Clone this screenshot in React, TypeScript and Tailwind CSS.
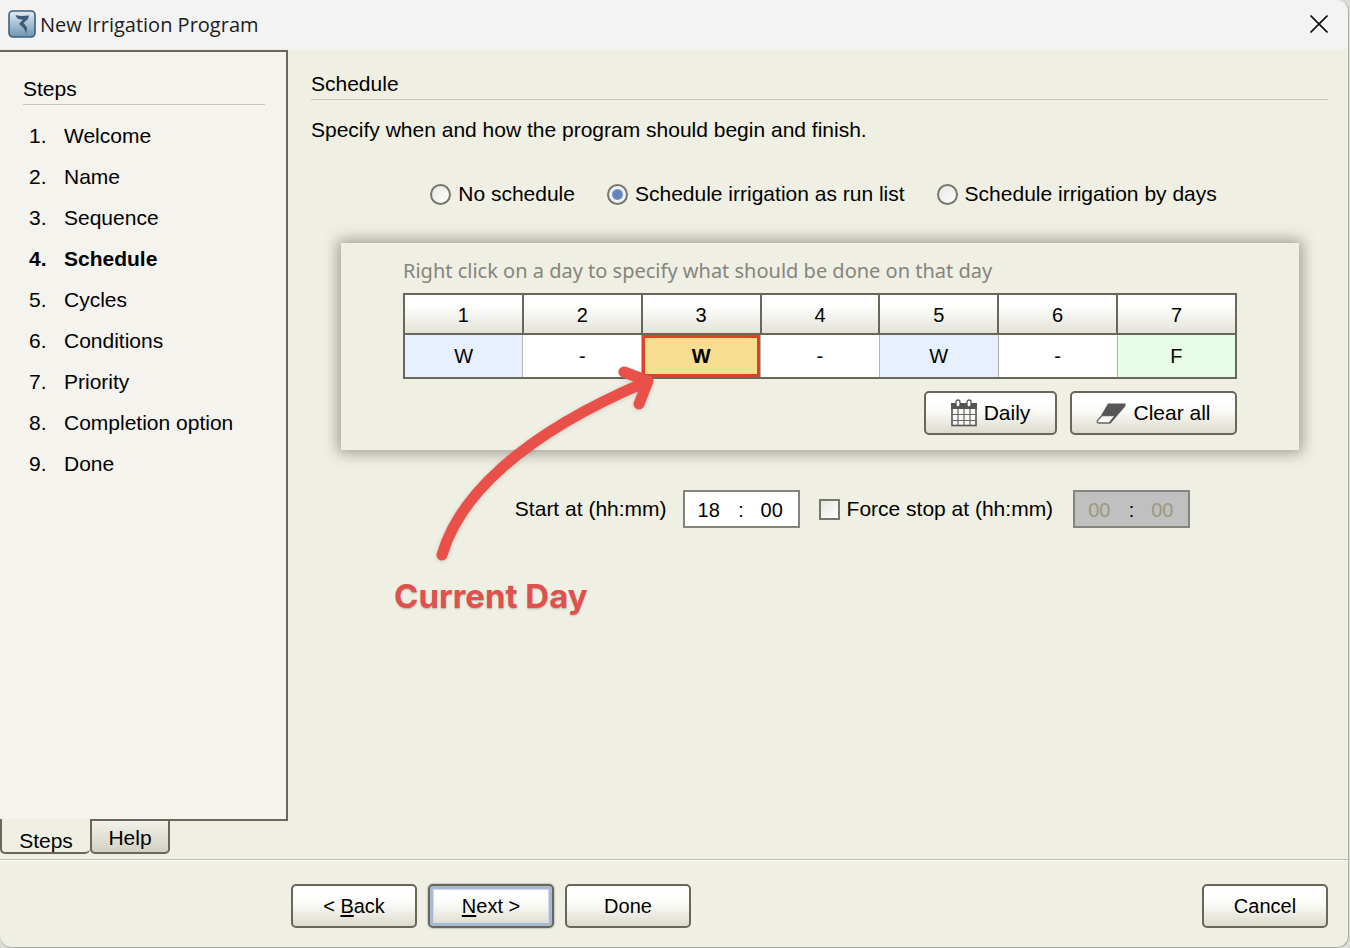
import { useState } from 'react'
import type { ReactNode } from 'react'
import clsx from 'clsx'

const steps = [
	'Welcome',
	'Name',
	'Sequence',
	'Schedule',
	'Cycles',
	'Conditions',
	'Priority',
	'Completion option',
	'Done',
]

const modes = [
	{ id: 'none', label: 'No schedule' },
	{ id: 'runlist', label: 'Schedule irrigation as run list' },
	{ id: 'days', label: 'Schedule irrigation by days' },
]

const days = ['W', '-', 'W', '-', 'W', '-', 'F']
const currentDay = 3

const AppIcon = () => (
	<svg className="size-7" viewBox="0 0 28 28" aria-hidden="true">
		<defs>
			<linearGradient id="app-icon" x1="0" y1="0" x2="0" y2="1">
				<stop offset="0" stopColor="#e3edf4" />
				<stop offset="1" stopColor="#6c93b2" />
			</linearGradient>
		</defs>
		<rect x="1" y="1" width="26" height="26" rx="4" fill="url(#app-icon)" stroke="#3c5f7c" strokeWidth="1.6" />
		<path
			d="M7.5 5C12 6.5 16 6 21 5.5L20 9L15.500 13L19 17.500L18.500 23.500L15.500 18L11 14L15 9.500C12 9.500 9 9.500 7.500 5Z"
			fill="#3a5c78"
		/>
	</svg>
)

const CalendarIcon = () => (
	<svg className="h-[28px] w-[26px]" viewBox="0 0 26 28" aria-hidden="true">
		<rect x="1" y="5" width="24" height="21.500" fill="#f8f8f5" stroke="#555" strokeWidth="1.600" />
		<rect x="0" y="4" width="26" height="6" fill="#555" />
		<path d="M7 10v17M13 10v17M19 10v17M0 15.500h26M0 21.500h26" stroke="#666" strokeWidth="1.200" />
		<rect x="5" y="1" width="4" height="7" rx="2" fill="#fff" stroke="#555" strokeWidth="1.300" />
		<rect x="16" y="1" width="4" height="7" rx="2" fill="#fff" stroke="#555" strokeWidth="1.300" />
	</svg>
)

const EraserIcon = () => (
	<svg className="h-[21px] w-[30px]" viewBox="0 0 30 21" aria-hidden="true">
		<path
			d="M6 12.500L1.500 17.500Q0.500 20 2.500 20H13.500L20 12.500Z"
			fill="#fafaf7"
			stroke="#666"
			strokeWidth="1.300"
			strokeLinejoin="round"
		/>
		<path d="M12 0.500H29.500V3L14.500 20.500L13 19.500L18.500 12.500H5Z" fill="#575757" />
	</svg>
)

type ButtonProps = { children: ReactNode; className?: string; focused?: boolean }

const Button = ({ children, className, focused }: ButtonProps) => (
	<button
		type="button"
		className={clsx(
			'flex h-11 items-center justify-center rounded-[5px] border-2 border-[#68675a] bg-linear-to-b from-white from-25% via-[#f8f8f4] via-50% to-[#dcdbcc]',
			focused && 'shadow-[inset_0_0_0_3px_#a9b9d1,inset_0_0_0_4px_#cfdcee,0_0_2px_#6d7687]',
			className
		)}
	>
		{children}
	</button>
)

type TimeFieldProps = { label: string; hours: string; minutes: string; disabled?: boolean }

const TimeField = ({ label, hours, minutes, disabled }: TimeFieldProps) => (
	<div
		role="group"
		aria-label={label}
		className={clsx(
			'flex h-[38px] w-[117px] items-center justify-between border-2 border-[#84847c] px-[13px] pt-[2px] text-[20px]',
			disabled ? 'bg-[#c0c0c0]' : 'bg-white'
		)}
	>
		<input
			aria-label={`${label} hours`}
			defaultValue={hours}
			disabled={disabled}
			className="w-6 bg-transparent outline-none disabled:text-[#9a997f]"
		/>
		<span>:</span>
		<input
			aria-label={`${label} minutes`}
			defaultValue={minutes}
			disabled={disabled}
			className="w-6 bg-transparent outline-none disabled:text-[#9a997f]"
		/>
	</div>
)

const Sidebar = () => (
	<aside className="flex w-[288px] shrink-0 flex-col pt-px pb-[5px]">
		<div className="flex-1 border-t-2 border-r-2 border-[#68675a] bg-[#f4f3ee] pt-[25px] pr-[21px] pl-[23px]">
			<h2 className="h-7 border-b border-[#c6c6bb] leading-6">Steps</h2>
			<ol className="mt-[10px] pl-[6px] leading-[41px]">
				{steps.map((step, i) => (
					<li key={step} className={clsx('flex', step === 'Schedule' && 'font-bold')}>
						<span className="w-[35px]">{i + 1}.</span>
						{step}
					</li>
				))}
			</ol>
		</div>
		<div className="flex h-[35px]" role="tablist">
			<button
				type="button"
				role="tab"
				aria-selected="true"
				className="w-[90px] rounded-b-[5px] border-b-2 border-l-2 border-[#68675a] pt-[6px]"
			>
				Steps
			</button>
			<button
				type="button"
				role="tab"
				aria-selected="false"
				className="w-20 rounded-b-[5px] border-2 border-[#68675a] bg-linear-to-b from-[#f2f2ea] to-[#d2d1c3] pt-px"
			>
				Help
			</button>
			<div className="flex-1 border-t-2 border-[#68675a]" />
		</div>
	</aside>
)

const DayTable = () => (
	<table className="mt-2 w-full table-fixed border-collapse border-2 border-[#68675a] text-center text-[20px]">
		<thead>
			<tr className="h-10">
				{days.map((_, i) => (
					<th
						key={i}
						className="border-2 border-[#68675a] bg-linear-to-b from-white from-25% to-[#e4e3d8] pt-[2px] font-normal"
					>
						{i + 1}
					</th>
				))}
			</tr>
		</thead>
		<tbody>
			<tr className="h-11">
				{days.map((day, i) => (
					<td
						key={i}
						className={clsx(
							'border-x border-[#b5b5ad]',
							i + 1 === currentDay
								? 'bg-[#f7dd8f] font-bold inset-ring-3 inset-ring-[#dc4424]'
								: day === 'W'
									? 'bg-[#e6f0fe]'
									: day === 'F'
										? 'bg-[#e6fce4]'
										: 'bg-white'
						)}
					>
						{day}
					</td>
				))}
			</tr>
		</tbody>
	</table>
)

const Callout = () => (
	<>
		<svg
			className="pointer-events-none absolute top-[120px] left-[93px] h-[202px] w-[224px] drop-shadow-sm"
			viewBox="434 363 224 202"
			fill="none"
			stroke="#e9504a"
			strokeWidth="11"
			strokeLinecap="round"
			strokeLinejoin="round"
			aria-hidden="true"
		>
			<path d="M442 555C458 499 518 436 646 382" />
			<path d="M624 372L648 381L639 404" />
		</svg>
		<p className="pointer-events-none absolute top-[331px] left-[53px] font-[Inter,sans-serif] text-[33px] leading-[44px] font-bold whitespace-nowrap text-[#e0514d] text-shadow-sm">
			Current Day
		</p>
	</>
)

const Schedule = () => {
	const [mode, setMode] = useState('runlist')

	return (
		<main className="min-w-0 flex-1 pt-[23px] pr-5 pl-[23px]">
			<h1 className="h-7 border-b border-[#c6c6bb] leading-6">Schedule</h1>
			<p className="mt-[18px] leading-6">Specify when and how the program should begin and finish.</p>
			<div className="mt-10 flex justify-center gap-8 pl-2 leading-6">
				{modes.map(({ id, label }) => (
					<label key={id} className="flex items-center gap-[7px]">
						<input
							type="radio"
							name="mode"
							checked={mode === id}
							onChange={() => setMode(id)}
							className="size-[21px] appearance-none rounded-full border-2 border-[#77766a] bg-linear-to-br from-[#e6e6e1] to-white checked:bg-[radial-gradient(circle,#5f86bd_0_4px,#7d9cc9_5px,#eef2f8_6px)]"
						/>
						{label}
					</label>
				))}
			</div>

			<section className="relative mr-[29px] ml-[30px] mt-[37px] bg-[#efefe3] px-[62px] pt-[14px] pb-[15px] shadow-[0_0_14px_3px_rgba(0,0,0,0.35)]">
				<p className="font-['Noto_Sans',sans-serif] text-[20px] leading-7 text-[#85857d]">
					Right click on a day to specify what should be done on that day
				</p>
				<DayTable />
				<div className="mt-3 flex justify-end gap-[13px]">
					<Button className="w-[133px] gap-[7px]">
						<CalendarIcon />
						Daily
					</Button>
					<Button className="w-[167px] gap-[7px]">
						<EraserIcon />
						Clear all
					</Button>
				</div>
				<Callout />
			</section>

			<div className="mt-10 flex items-center justify-center pl-[66px]">
				<span className="mr-4">Start at (hh:mm)</span>
				<TimeField label="Start at" hours="18" minutes="00" />
				<label className="mr-5 ml-[19px] flex items-center gap-[7px]">
					<input
						type="checkbox"
						className="size-[21px] appearance-none border-2 border-[#77766a] bg-linear-to-br from-[#e6e6e1] to-white checked:bg-[#5f86bd]"
					/>
					Force stop at (hh:mm)
				</label>
				<TimeField label="Force stop at" hours="00" minutes="00" disabled />
			</div>
		</main>
	)
}

const App = () => (
	<div className="flex min-h-screen bg-[#dcdcd9] pr-px font-['Liberation_Sans',Arial,sans-serif] text-[21px] text-black">
		<div className="flex flex-1 flex-col overflow-hidden rounded-tr-xl rounded-b-xl border-r border-b border-[#a9aaa5] bg-[#efefe3]">
			<header className="flex h-[49px] items-center bg-[#f3f3f3] pr-5 pb-[2px] pl-2">
				<AppIcon />
				<span className="ml-1 pt-[2px] font-['Open_Sans',sans-serif] text-[20px] text-[#1c1c1c]">
					New Irrigation Program
				</span>
				<button type="button" aria-label="Close" className="ml-auto">
					<svg className="size-[18px]" viewBox="0 0 18 18" stroke="#111" strokeWidth="1.700" aria-hidden="true">
						<path d="M0.500 0.500L17.500 17.500M17.500 0.500L0.500 17.500" />
					</svg>
				</button>
			</header>
			<div className="flex flex-1">
				<Sidebar />
				<Schedule />
			</div>
			<footer className="flex gap-[11px] border-t border-[#bdbdb2] pt-6 pr-5 pb-[19px] pl-[291px] text-[20px] shadow-[inset_0_1px_0_#fff]">
				<Button className="w-[126px]">
					<span>
						&lt; <u className="underline-offset-2">B</u>ack
					</span>
				</Button>
				<Button className="w-[126px]" focused>
					<span>
						<u className="underline-offset-2">N</u>ext &gt;
					</span>
				</Button>
				<Button className="w-[126px]">Done</Button>
				<Button className="ml-auto w-[126px]">Cancel</Button>
			</footer>
		</div>
	</div>
)

export default App
